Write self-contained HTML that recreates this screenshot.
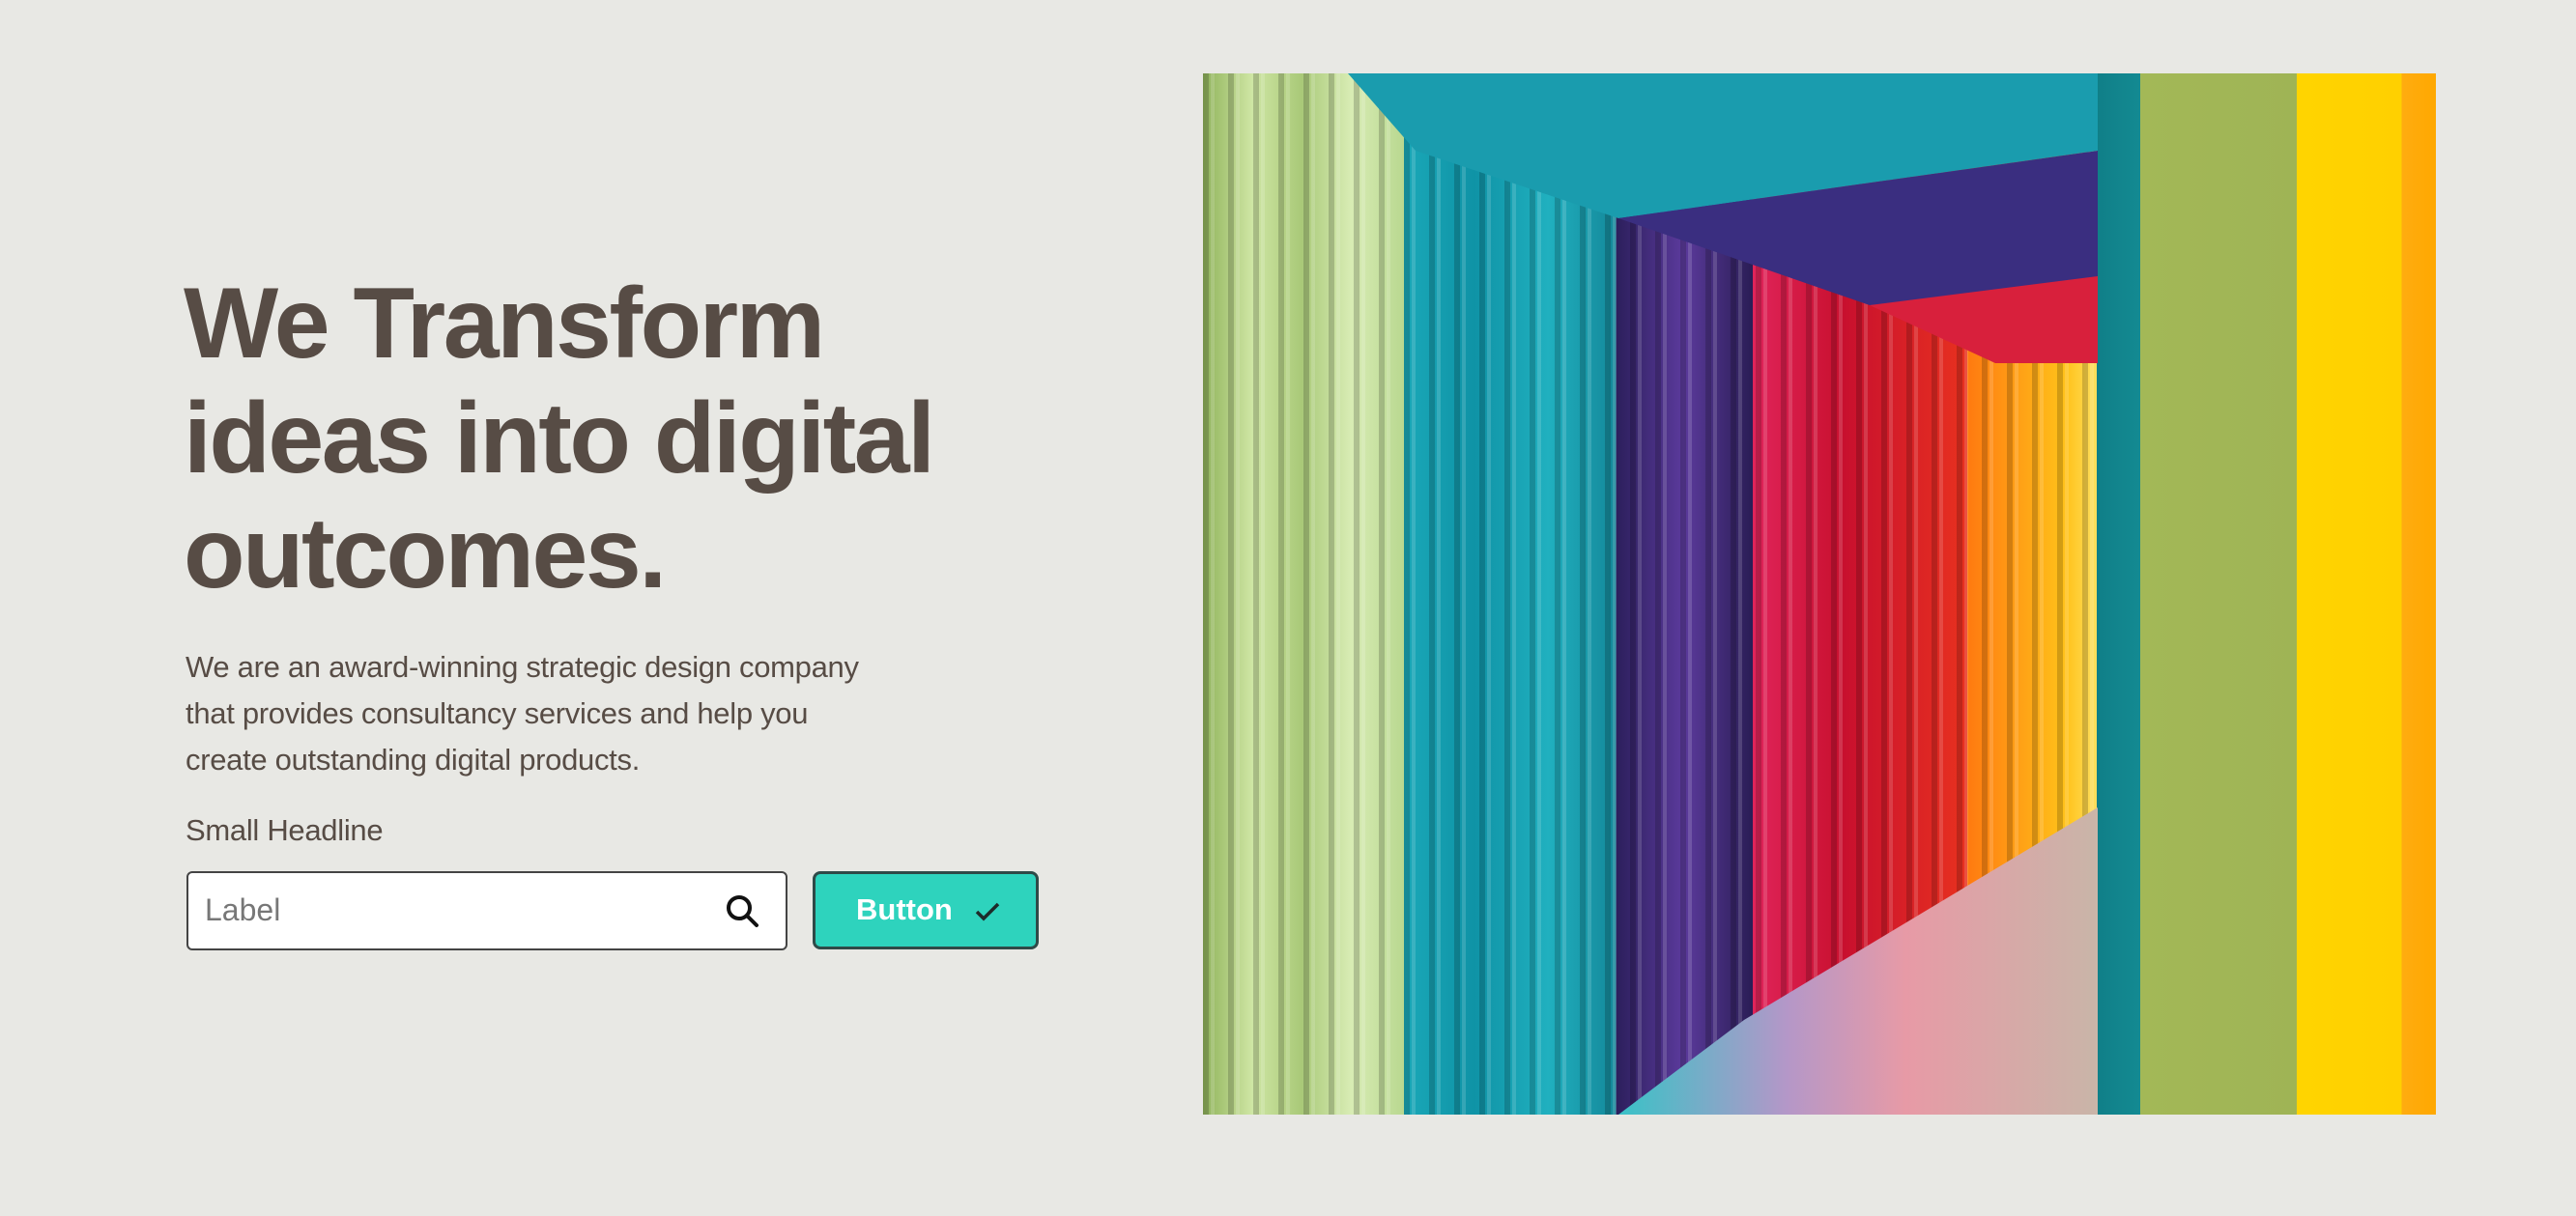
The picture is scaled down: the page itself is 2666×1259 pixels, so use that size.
<!DOCTYPE html>
<html><head><meta charset="utf-8"><style>
html,body{margin:0;padding:0}
body{width:2666px;height:1259px;background:#e8e8e4;position:relative;overflow:hidden;font-family:"Liberation Sans",Arial,sans-serif;color:#574c45}
h1{position:absolute;left:190px;top:276px;margin:0;font-size:104px;line-height:119px;font-weight:bold;letter-spacing:-2.5px;width:900px}
p{position:absolute;left:192px;top:667px;margin:0;font-size:31px;line-height:48px;width:900px;letter-spacing:-0.3px;white-space:nowrap}
.sh{position:absolute;left:192px;top:842px;font-size:31px;letter-spacing:-0.3px}
.inp{position:absolute;left:193px;top:902px;width:618px;height:78px;border:2px solid #444;border-radius:6px;background:#fff;box-sizing:content-box}
.inp span{position:absolute;left:17px;top:20px;font-size:32px;color:#777}
.inp svg{position:absolute;left:554px;top:20px}
.btn{position:absolute;left:841px;top:902px;width:228px;height:75px;border:3px solid #2f4a48;border-radius:8px;background:#2ed3bd}
.btn span{position:absolute;left:42px;top:19px;font-size:31px;font-weight:bold;color:#fff}
.btn svg{position:absolute;left:163px;top:24px}
.pic{position:absolute;left:1245px;top:76px;width:1276px;height:1078px}
</style></head><body>
<h1>We Transform ideas into digital outcomes.</h1>
<p>We are an award-winning strategic design company<br>that provides consultancy services and help you<br>create outstanding digital products.</p>
<div class="sh">Small Headline</div>
<div class="inp"><span>Label</span><svg width="40" height="40" viewBox="0 0 40 40"><circle cx="16" cy="16" r="11" fill="none" stroke="#111" stroke-width="4"/><path d="M24 24l10 10" stroke="#111" stroke-width="4" stroke-linecap="round"/></svg></div>
<div class="btn"><span>Button</span><svg width="30" height="30" viewBox="0 0 30 30"><path d="M4 15l7 7 15-15" fill="none" stroke="#1d2b2a" stroke-width="3.5"/></svg></div>
<svg class="pic" viewBox="0 0 1276 1078" preserveAspectRatio="none">
<defs>
<linearGradient id="g" x1="0" x2="1" y1="0" y2="0">
<stop offset="0" stop-color="#8fb25a"/><stop offset=".04" stop-color="#cfe6a4"/><stop offset=".08" stop-color="#a9c978"/><stop offset=".12" stop-color="#d8ecb4"/><stop offset=".163" stop-color="#b9d890"/>
<stop offset=".163" stop-color="#1aa8b8"/><stop offset=".22" stop-color="#0f93a6"/><stop offset=".28" stop-color="#20b0bf"/><stop offset=".335" stop-color="#14889a"/>
<stop offset=".335" stop-color="#2c1f5c"/><stop offset=".39" stop-color="#5b3a9c"/><stop offset=".446" stop-color="#2a1d55"/>
<stop offset=".446" stop-color="#e0245a"/><stop offset=".52" stop-color="#c8102e"/><stop offset=".62" stop-color="#e8311f"/>
<stop offset=".62" stop-color="#ff7a10"/><stop offset=".7" stop-color="#ffc21a"/><stop offset=".725" stop-color="#ffe060"/>
<stop offset=".725" stop-color="#107f88"/><stop offset=".76" stop-color="#138a92"/>
<stop offset=".76" stop-color="#a3b857"/><stop offset=".887" stop-color="#9fb455"/>
<stop offset=".887" stop-color="#ffd400"/><stop offset=".972" stop-color="#ffd000"/>
<stop offset=".972" stop-color="#ffac10"/><stop offset="1" stop-color="#ffa800"/>
</linearGradient>
<linearGradient id="f" x1="0" x2="1"><stop offset="0" stop-color="#39c2c7"/><stop offset=".35" stop-color="#b497c8"/><stop offset=".6" stop-color="#e79aa6"/><stop offset="1" stop-color="#c9b5a8"/></linearGradient>
<pattern id="s" width="26" height="10" patternUnits="userSpaceOnUse"><rect x="0" width="6" height="10" fill="#000" opacity=".18"/><rect x="8" width="4" height="10" fill="#fff" opacity=".15"/></pattern>
</defs>
<rect width="1276" height="1078" fill="url(#g)"/>
<rect x="0" width="926" height="1078" fill="url(#s)"/>
<polygon points="150,0 926,0 926,80 430,150 220,80" fill="#1a9cae"/>
<polygon points="430,150 926,80 926,230 690,240" fill="#3a2e80"/>
<polygon points="690,240 926,210 926,300 820,300" fill="#d8203c"/>
<polygon points="430,1078 926,1078 926,760 560,980" fill="url(#f)"/>
</svg>
</body></html>
